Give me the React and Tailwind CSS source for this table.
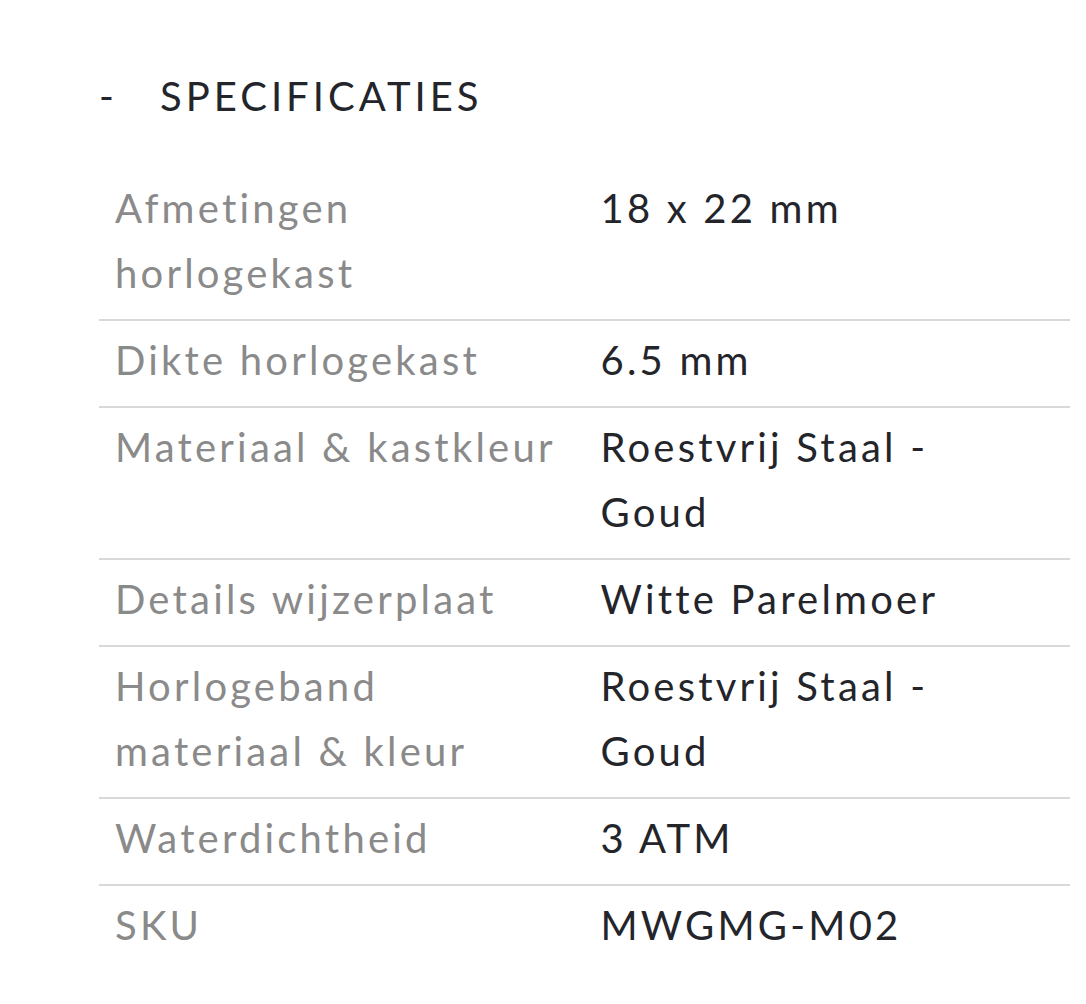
import React from "react";

const specs = [
  ["Afmetingen horlogekast", "18 x 22 mm"],
  ["Dikte horlogekast", "6.5 mm"],
  ["Materiaal & kastkleur", "Roestvrij Staal - Goud"],
  ["Details wijzerplaat", "Witte Parelmoer"],
  ["Horlogeband materiaal & kleur", "Roestvrij Staal - Goud"],
  ["Waterdichtheid", "3 ATM"],
  ["SKU", "MWGMG-M02"],
];

export default function App() {
  return (
    <div className="min-h-screen bg-white font-['Lato',sans-serif] pl-[99px] pr-[16px]">
      <div className="flex items-center h-[65px] mt-[63px] text-[40px] text-[#23252b] tracking-[0.1em]">
        <span className="w-[61px]">-</span>
        <span>SPECIFICATIES</span>
      </div>
      <div className="mt-[41px] divide-y-2 divide-[#d9d9d9]">
        {specs.map(([label, value]) => (
          <div key={label} className="grid grid-cols-2 text-[40px] leading-[65px] tracking-[0.08em] pt-[7px] pb-[13px]">
            <div className="pl-4 pr-4 text-[#8a8a8a]">{label}</div>
            <div className="pl-4 pr-[40px] text-[#23252b]">{value}</div>
          </div>
        ))}
      </div>
    </div>
  );
}
